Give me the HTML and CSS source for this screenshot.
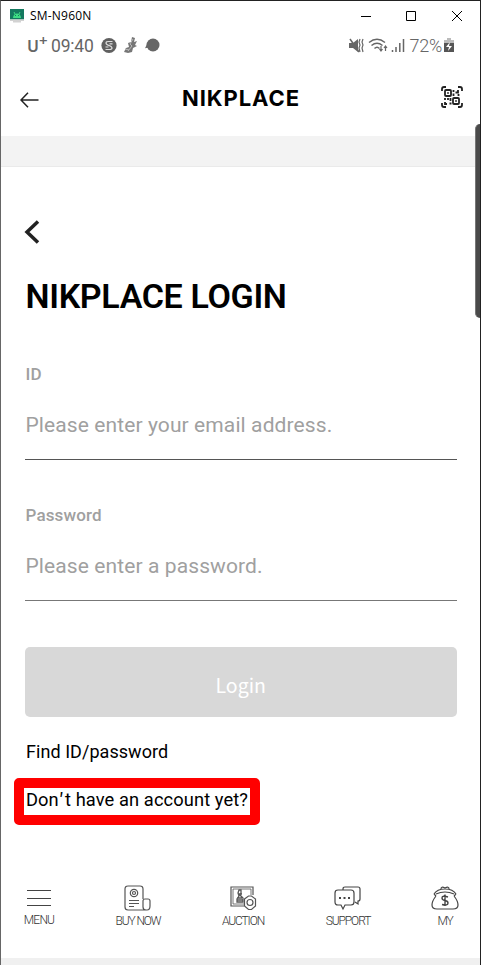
FILE: index.html
```html
<!DOCTYPE html>
<html lang="en">
<head>
<meta charset="utf-8">
<title>NIKPLACE Login</title>
<link rel="stylesheet" href="styles.css">
</head>
<body>
<div class="window">
  <div class="titlebar">
    <svg class="app-icon" width="14" height="14" viewBox="0 0 14 14"><path fill="#14795f" d="M0 0h14v10.500H0z"/><path fill="#3ddc84" d="M3 9a4 4.500 0 0 1 8 0z"/><path stroke="#3ddc84" d="M4 3l1 2M10 3L9 5"/><path fill="#14795f" d="M5 6h1v1H5zM8 6h1v1H8z"/><path fill="#d2d2d2" d="M0 10.500h14V12H0zM3 12h8v1.500H3z"/></svg>
    <span class="device">SM-N960N</span>
    <svg class="controls" width="102" height="12" viewBox="0 0 102 12" fill="none" stroke="#000"><path d="M0 6.500h10M45.500 1.500h9v9h-9zM91 1l10 10M101 1L91 11"/></svg>
  </div>
  <div class="status">
    <span class="carrier">U<sup>+</sup></span>
    <span class="time">09:40</span>
    <svg class="notices" width="60" height="18" viewBox="0 0 60 18"><circle cx="8" cy="8.500" r="7.600" fill="#606060"/><path d="M11.500 4.500H7.500Q5 4.500 5 6T8 8.500t3 2.500T8.500 12.500H4.500M4.500 10h3M8.500 6.800h3" fill="none" stroke="#ddd" stroke-width="1.200"/><path d="M31 0l3 1-1 4 3-1-2 4 2 1-4 2-1 4-4 1-4-1 2-4 3-1-1-4 3-1z" fill="#777"/><path d="M32 2l-3 5 2 2-4 5M24 12l4 1" fill="none" stroke="#bbb"/><circle cx="52" cy="8" r="6.500" fill="#666"/><path d="M48 3.300l-4 8 5-1z" fill="#666"/></svg>
    <svg class="signals" width="56" height="16" viewBox="0 0 56 16" fill="none" stroke="#666" stroke-width="1.500"><path fill="#666" stroke="none" d="M0 5h4l5-4v13l-5-4H0z"/><path d="M1 1l9 13"/><path d="M11 1l-1 3 1 3-1 3 1 4M14 1l-1 3 1 3-1 3 1 4" stroke-width="1.200"/><path d="M20 4.500q8-6.500 16 0M22.500 7.500q5.500-4.500 11 0M25.500 10.500q2.500-2.500 5 0"/><path stroke-width="1.200" d="M32 8v5M30.500 11l1.500 2 1.500-2M36.500 13V8M35 10l1.500-2L38 10"/><path stroke-width="1.500" d="M43.500 14v-2M47 14V9M50.800 14V5M54.500 14V1"/></svg>
    <span class="percent">72%</span>
    <svg class="battery" width="10" height="15" viewBox="0 0 10 15"><path fill="#bbb" d="M3 0h4v2h3v4H0V2h3z"/><path fill="#555" d="M0 5h10v9H0z"/><path fill="#fff" d="M6 4L2 9h3l-1 4 4-5H5z"/></svg>
  </div>
  <header class="header">
    <svg class="arrow" width="19" height="16" viewBox="0 0 19 16" fill="none" stroke="#222" stroke-width="1.500"><path d="M8 .8L1 8l7 7.200M1 8h17.500"/></svg>
    <span class="brand">NIKPLACE</span>
    <svg class="qr" width="22" height="22" viewBox="0 0 22 22" fill="none" stroke="#222" stroke-width="1.800"><path d="M1 5V3q0-2 2-2h2M17 1h2q2 0 2 2v2M21 17v2q0 2-2 2h-2M5 21H3q-2 0-2-2v-2"/><rect x="4" y="4" width="6" height="6" rx="1"/><rect x="12" y="12" width="6" height="6" rx="1"/><path d="M7 6.200v1.600M15 14.200v1.600M12.500 4v2M14.500 6.500h2.500V4M12.500 7.500v2.500M17.500 8v2M4 12v2M4 16v2h2M7 12v2M9.500 12v3M8.500 17.500h2"/></svg>
  </header>
  <div class="band"></div>
  <main class="login">
    <svg class="chevron" width="16" height="24" viewBox="0 0 16 24" fill="none" stroke="#222" stroke-width="3.500"><path d="M14 1.500L3 12l11 10.500"/></svg>
    <h1 class="heading">NIKPLACE LOGIN</h1>
    <div class="field"><label class="label label-id">ID</label><div class="placeholder email">Please enter your email address.</div></div>
    <div class="field second"><label class="label">Password</label><div class="placeholder password">Please enter a password.</div></div>
    <div class="button">Login</div>
    <div class="find">Find ID/password</div>
    <div class="signup"><span>Don<span class="prime">′</span>t have an account yet?</span></div>
  </main>
  <nav class="nav">
    <div class="item menu"><svg width="28" height="27" viewBox="0 0 28 27" fill="none" stroke="#444" stroke-width="1.200"><path d="M2 5.500h24M2 13.500h24M2 20.500h24"/></svg><span>MENU</span></div>
    <div class="item"><svg width="28" height="27" viewBox="0 0 28 27" fill="none" stroke="#555" stroke-width="1.200"><path d="M19 14V4q0-3-3-3H4Q1 1 1 4v18q0 3 3 3h19q3 0 3-4v-5q0-2-2-2h-3q-2 0-2 2v6q0 3 3 3"/><circle cx="10" cy="8" r="3.700"/><circle cx="10" cy="8" r="1.500"/><path d="M5 15.500h10M5 18.500h10M5 21.500h5"/></svg><span>BUY NOW</span></div>
    <div class="item"><svg width="28" height="27" viewBox="0 0 28 27" fill="none" stroke="#555" stroke-width="1.200"><path d="M24 10V2H2v19h13"/><path d="M22 10V4H4v15h11" stroke-width=".8"/><path d="M10 5h2v3l-1 2 3 3v4H8v-3l2-3-1-3zM9 9h4M8 13h5M8 15h6" stroke-width="1.300"/><path d="M15.500 14l4-3h3l4 3v7l-4 3.500h-3l-4-3.500z" fill="#fff"/><circle cx="21" cy="17.500" r="3"/></svg><span>AUCTION</span></div>
    <div class="item"><svg width="28" height="27" viewBox="0 0 28 27" fill="none" stroke="#444" stroke-width="1.200"><path d="M9 5V4q0-2 2-2h13q2 0 2 2v10q0 2-2 2v3l-3-2"/><path d="M4 5h13q3 0 3 3v9q0 3-3 3h-6l-2 4-2-4H4q-3 0-3-3V8q0-3 3-3z"/><path stroke-width="2" d="M5 13h2M9.500 13h2M14 13h2"/></svg><span>SUPPORT</span></div>
    <div class="item"><svg width="28" height="27" viewBox="0 0 28 27" fill="none" stroke="#444" stroke-width="1.200"><path d="M3 9Q6 4 14 4t11 5M5 9q9-4 18 0M3 9l2 2M25 9l-2 2M10 4q0-3 4-1 4-2 4 1M5 11q-4 5-4 9 0 4 5 4h16q5 0 5-4 0-4-4-9"/><path d="M17 12q-6-2-6 1 0 2 3 2.500t3 2.500q0 3-6 1.500M14 9.500v11.500" stroke-width="1.400"/></svg><span>MY</span></div>
  </nav>
  <div class="bottom"></div>
  <div class="edge"></div>
</div>
</body>
</html>
```
FILE: styles.css
```css
* { box-sizing: border-box; }
body { margin: 0; width: 481px; height: 965px; font-family: Roboto, sans-serif; overflow: hidden; }
svg { display: block; flex: none; }
.window { position: relative; display: flex; flex-direction: column; width: 481px; height: 965px; background: #fff; border: 1px solid #222; border-left-color: #666; border-bottom: 0; white-space: nowrap; overflow: hidden; }
.titlebar { height: 29px; display: flex; align-items: center; padding: 0 17px 0 9px; }
.device { margin-left: 6px; font: 12px/16px "Open Sans", sans-serif; letter-spacing: .2px; }
.controls { margin-left: auto; }
.status { height: 31px; display: flex; align-items: center; padding: 0 26px; color: #666; }
.carrier { font: 600 16px/20px "Noto Sans", sans-serif; width: 24px; }
.carrier sup { font-size: 15px; line-height: 0; }
.time { font-size: 17.500px; line-height: 20px; width: 50px; letter-spacing: -.2px; }
.signals { margin-left: auto; }
.percent { margin-left: 5px; font-size: 18px; font-weight: 300; letter-spacing: -.3px; }
.battery { margin-left: 2px; }
.header { height: 75px; display: flex; align-items: center; justify-content: space-between; padding: 0 17px 0 19px; }
.arrow { margin-top: 3px; }
.qr { margin-top: -3px; }
.brand { font: 700 22px/28px Inter, sans-serif; letter-spacing: .9px; margin: -1px 0 0 2px; }
.band { height: 31px; background: #f3f3f3; border-bottom: 1px solid #eaeaea; }
.login { height: 703px; padding: 53px 23.500px 0 24px; display: flex; flex-direction: column; }
.chevron { margin-left: -1px; }
.heading { margin: 32px 0 1px .5px; font-size: 34px; line-height: 40px; font-weight: 600; letter-spacing: -.35px; }
.field { height: 143px; padding: 46px 0 0 .5px; border-bottom: 1px solid #555; color: #a0a0a0; }
.field.second { height: 141px; padding-top: 44px; border-color: #777; }
.label { display: block; font-size: 17px; line-height: 22px; font-weight: 500; letter-spacing: .15px; }
.placeholder { margin-top: 26px; font-size: 21px; line-height: 28px; letter-spacing: .1px; }
.button { margin-top: 46px; height: 70px; border-radius: 5px; background: #d8d8d8; color: #fff; text-align: center; font: 19.500px/76px "Noto Sans CJK KR", sans-serif; }
.find { margin: 22px 0 0 1px; font-size: 18px; line-height: 26px; letter-spacing: .05px; }
.signup { margin: 13px 0 0 -11px; width: 246px; height: 47px; padding: 0 2px; border: 10px solid #f00; border-radius: 5px; font-size: 18.300px; line-height: 24px; letter-spacing: .1px; }
.prime { font-family: "Noto Sans CJK KR", sans-serif; line-height: 0; letter-spacing: 1px; }
.nav { height: 88px; display: grid; grid-template-columns: 76px 122px 88px 122px 72px; padding-top: 15px; color: #333; }
.item { display: flex; flex-direction: column; align-items: center; }
.item span { font-size: 12px; line-height: 16px; font-weight: 300; letter-spacing: -1.100px; margin-top: 1px; }
.item.menu span { margin-top: 0; letter-spacing: -.8px; }
.bottom { height: 7px; background: #f0f0f0; }
.edge { position: absolute; right: -1px; top: 123px; width: 6px; height: 194px; background: #4a4a4a; border-left: 1px solid #777; border-radius: 5px 0 0 5px; }
```
